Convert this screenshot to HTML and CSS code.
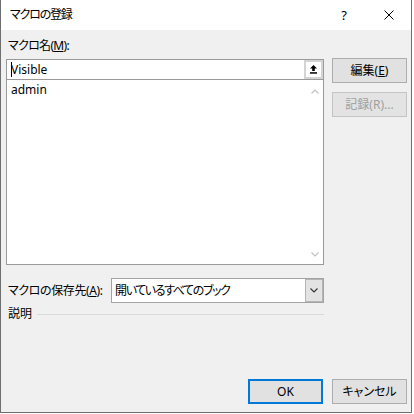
FILE: index.html
```html
<!DOCTYPE html>
<html lang="ja">
<head>
<meta charset="utf-8">
<title>マクロの登録</title>
<link rel="stylesheet" href="styles.css">
</head>
<body>
<div class="window">
  <div class="titlebar">
    <span class="title">マクロの登録</span>
    <div class="controls">
      <span class="ctrl help">?</span>
      <span class="ctrl close">
        <svg width="10" height="10" viewBox="0 0 10 10"><path d="M0.5 0.5 L9.5 9.5 M9.5 0.5 L0.5 9.5" stroke="#000" stroke-width="1" fill="none"/></svg>
      </span>
    </div>
  </div>
  <div class="content">
    <div class="label">マクロ名(<u>M</u>):</div>
    <div class="main">
      <div class="leftcol">
        <div class="input">
          <span class="value"><span class="caret"></span>Visible</span>
          <span class="refbtn">
            <svg width="7" height="9" viewBox="0 0 7 9"><path d="M3.5 0 L7 3.5 H4.8 V6 H2.2 V3.5 H0 Z" fill="#000"/><rect x="0" y="7.2" width="7" height="1.5" fill="#000"/></svg>
          </span>
        </div>
        <div class="list">
          <div class="items">
            <div class="item">admin</div>
          </div>
          <div class="scrollbar">
            <span class="arrow up"><svg width="8" height="5" viewBox="0 0 8 5"><path d="M0.5 4.5 L4 1 L7.5 4.5" stroke="#c2c2c2" stroke-width="1.2" fill="none"/></svg></span>
            <span class="arrow down"><svg width="8" height="5" viewBox="0 0 8 5"><path d="M0.5 0.5 L4 4 L7.5 0.5" stroke="#c2c2c2" stroke-width="1.2" fill="none"/></svg></span>
          </div>
        </div>
      </div>
      <div class="rightcol">
        <div class="btn">編集(<u>E</u>)</div>
        <div class="btn disabled">記録(R)...</div>
      </div>
    </div>
    <div class="saverow">
      <span class="savelabel">マクロの保存先(<u>A</u>):</span>
      <div class="combo">
        <span class="combotext">開いているすべてのブック</span>
        <span class="dropbtn"><svg width="8" height="5" viewBox="0 0 8 5"><path d="M0.5 0.5 L4 4 L7.5 0.5" stroke="#333" stroke-width="1.1" fill="none"/></svg></span>
      </div>
    </div>
    <div class="descrow">
      <span class="desclabel">説明</span>
      <span class="rule"></span>
    </div>
    <div class="footer">
      <div class="btn default">OK</div>
      <div class="btn">キャンセル</div>
    </div>
  </div>
</div>
</body>
</html>
```
FILE: styles.css
```css
html, body {
  margin: 0;
  padding: 0;
  background: #ffffff;
}
body {
  font-family: "Noto Sans", "Noto Sans CJK JP", sans-serif;
  font-size: 12px;
  color: #000;
  font-feature-settings: "palt";
}
u {
  text-decoration: underline;
  text-underline-offset: 1px;
}
.window {
  width: 412px;
  height: 413px;
  box-sizing: border-box;
  border: 1px solid #6f6f6f;
  border-top: none;
  background: #f0f0f0;
  display: flex;
  flex-direction: column;
}
.titlebar {
  height: 30px;
  flex: 0 0 30px;
  background: #ffffff;
  display: flex;
  align-items: center;
  justify-content: space-between;
  padding-left: 9px;
}
.title {
  line-height: 16px;
  letter-spacing: -1.2px;
}
.controls {
  display: flex;
  height: 30px;
}
.ctrl {
  display: flex;
  align-items: center;
  justify-content: center;
  height: 30px;
}
.help {
  width: 46px;
  font-size: 13px;
}
.close {
  width: 44px;
}
.content {
  flex: 1;
  display: flex;
  flex-direction: column;
  padding: 8px 4px 8px 5px;
}
.label {
  line-height: 16px;
  height: 16px;
  padding-left: 2px;
  letter-spacing: -0.7px;
}
.main {
  margin-top: 4px;
  display: grid;
  grid-template-columns: 318px 75px;
  column-gap: 8px;
  align-items: start;
}
.leftcol {
  display: flex;
  flex-direction: column;
}
.input {
  margin-top: 1px;
  height: 21px;
  box-sizing: border-box;
  border: 1px solid #9a9a9a;
  background: #fff;
  display: flex;
  align-items: center;
  justify-content: space-between;
}
.value {
  padding-left: 4px;
  line-height: 16px;
  display: flex;
  align-items: center;
}
.caret {
  display: inline-block;
  width: 1px;
  height: 15px;
  background: #000;
  margin-right: -1px;
}
.refbtn {
  width: 19px;
  height: 19px;
  box-sizing: border-box;
  border: 2px solid #d4d4d4;
  background: #fff;
  display: flex;
  align-items: center;
  justify-content: center;
}
.list {
  height: 185px;
  box-sizing: border-box;
  border: 1px solid #9a9a9a;
  border-top: none;
  background: #fff;
  display: flex;
}
.items {
  flex: 1;
  padding: 2px 4px;
}
.item {
  line-height: 16px;
}
.scrollbar {
  width: 17px;
  display: flex;
  flex-direction: column;
  justify-content: space-between;
  background: #fff;
}
.arrow {
  height: 17px;
  display: flex;
  justify-content: center;
  align-items: center;
}
.arrow.up {
  margin-top: 3px;
}
.arrow.down {
  margin-bottom: 1px;
}
.rightcol {
  display: flex;
  flex-direction: column;
  gap: 9px;
}
.btn {
  width: 75px;
  height: 25px;
  box-sizing: border-box;
  border: 1px solid #adadad;
  background: #e1e1e1;
  display: flex;
  align-items: center;
  justify-content: center;
  line-height: 16px;
}
.btn.disabled {
  color: #a0a0a0;
  border-color: #c4c4c4;
  background: #e3e3e3;
}
.btn.default {
  border: 2px solid #0078d7;
}
.saverow {
  margin-top: 13px;
  display: flex;
  align-items: center;
  width: 318px;
}
.savelabel {
  flex: 0 0 105px;
  box-sizing: border-box;
  padding-left: 2px;
  line-height: 16px;
  letter-spacing: -0.4px;
}
.combo {
  width: 213px;
  height: 25px;
  box-sizing: border-box;
  border: 1px solid #a3a3a3;
  background: #fff;
  display: flex;
  align-items: center;
  justify-content: space-between;
}
.combotext {
  padding-left: 3px;
  line-height: 16px;
  letter-spacing: -1.4px;
}
.dropbtn {
  width: 18px;
  height: 23px;
  box-sizing: border-box;
  border: 1px solid #b5b5b5;
  background: #e3e3e3;
  display: flex;
  align-items: center;
  justify-content: center;
}
.descrow {
  margin-top: 3px;
  width: 318px;
  height: 16px;
  display: flex;
  align-items: center;
}
.desclabel {
  padding-left: 2px;
  line-height: 16px;
}
.rule {
  flex: 1;
  height: 1px;
  background: #dadada;
  margin-left: 5px;
}
.footer {
  margin-top: auto;
  display: flex;
  justify-content: flex-end;
  gap: 9px;
}
```
